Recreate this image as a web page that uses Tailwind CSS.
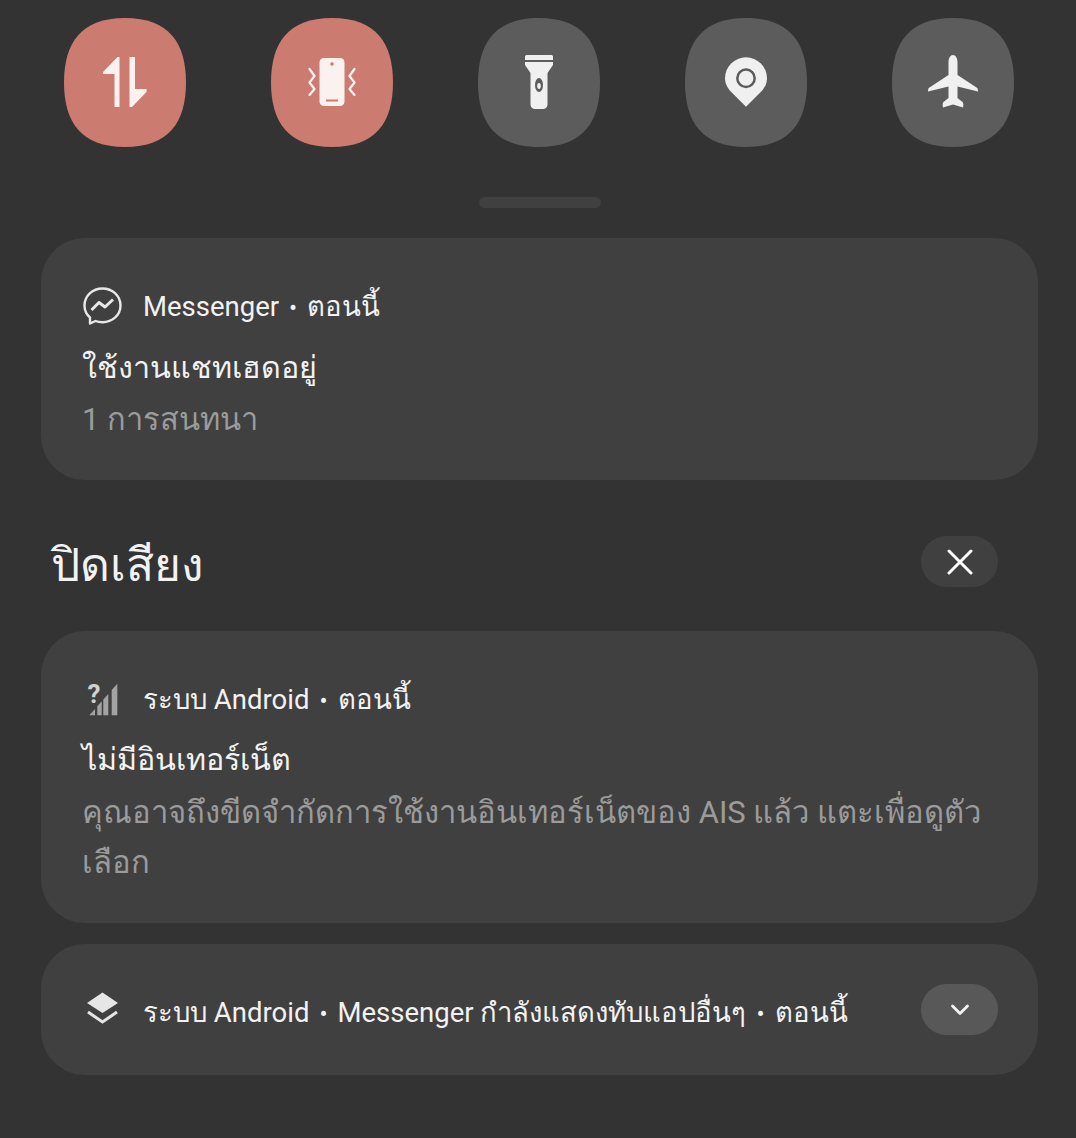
<!DOCTYPE html>
<html lang="th">
<head>
    <meta charset="UTF-8">
    <meta name="viewport" content="width=device-width, initial-scale=1.0">
    <title>Notification shade</title>
    <script src="https://cdn.jsdelivr.net/npm/@tailwindcss/browser@4"></script>
</head>
<body class="bg-[#333333] font-['Roboto','Noto_Sans',sans-serif] text-[#f2f2f2] overflow-hidden">
    <main class="w-[1076px] h-[1138px] pt-[18px]">
        <!-- Quick toggles -->
        <div class="flex gap-[85px] pl-[64px]">
            <svg class="w-[122px] h-[129px]" viewBox="0 0 122 129">
                <path fill="#cb7b70" d="M61 0C105 0 122 25 122 64.500C122 104 105 129 61 129C17 129 0 104 0 64.500C0 25 17 0 61 0Z"/>
                <path fill="#fbf1ef" d="M55.500 39V89H50.500V56H39V54L53.500 39ZM65.500 39H71V71H82.500V74L68 89H65.500Z"/>
            </svg>
            <svg class="w-[122px] h-[129px]" viewBox="0 0 122 129">
                <path fill="#cb7b70" d="M61 0C105 0 122 25 122 64.500C122 104 105 129 61 129C17 129 0 104 0 64.500C0 25 17 0 61 0Z"/>
                <rect x="48.500" y="40" width="25" height="48" rx="4.500" fill="#fbf1ef"/>
                <circle cx="61" cy="46" r="1.800" fill="#cb7b70"/>
                <rect x="55" y="81.500" width="12" height="2" fill="#cb7b70"/>
                <path fill="none" stroke="#fbf1ef" stroke-width="2.200" stroke-linecap="round" stroke-linejoin="round" d="M38.500 51L43.500 58L38.500 64.500L43.500 71L38.500 77M83.500 51L78.500 58L83.500 64.500L78.500 71L83.500 77"/>
            </svg>
            <svg class="w-[122px] h-[129px]" viewBox="0 0 122 129">
                <path fill="#5c5c5c" d="M61 0C105 0 122 25 122 64.500C122 104 105 129 61 129C17 129 0 104 0 64.500C0 25 17 0 61 0Z"/>
                <path fill="#f0f0f0" d="M48.500 37H73.500A1.500 1.500 0 0 1 75 38.500V42H47V38.500A1.500 1.500 0 0 1 48.500 37ZM47 44H75V47L69.500 55V86.500A4.500 4.500 0 0 1 65 91H57A4.500 4.500 0 0 1 52.500 86.500V55L47 47Z"/>
                <ellipse cx="61" cy="67" rx="4" ry="7" fill="#5c5c5c"/>
                <ellipse cx="61" cy="68" rx="1.800" ry="3" fill="#f0f0f0"/>
            </svg>
            <svg class="w-[122px] h-[129px]" viewBox="0 0 122 129">
                <path fill="#5c5c5c" d="M61 0C105 0 122 25 122 64.500C122 104 105 129 61 129C17 129 0 104 0 64.500C0 25 17 0 61 0Z"/>
                <path fill="#f0f0f0" d="M61 39.300A21 21 0 0 1 82 60.300C82 65.800 79.500 69.800 76.500 73.300L61 88.700L45.500 73.300C42.500 69.800 40 65.800 40 60.300A21 21 0 0 1 61 39.300Z"/>
                <circle cx="61" cy="60.300" r="8.700" fill="#f0f0f0" stroke="#5c5c5c" stroke-width="2.500"/>
            </svg>
            <svg class="w-[122px] h-[129px]" viewBox="0 0 122 129">
                <path fill="#5c5c5c" d="M61 0C105 0 122 25 122 64.500C122 104 105 129 61 129C17 129 0 104 0 64.500C0 25 17 0 61 0Z"/>
                <path fill="#f0f0f0" d="M61 37C63.800 37 65.500 40.500 65.500 44V57L84.500 69.500C85.600 70.300 86 71 86 73.500L65.500 68.500V80L70.500 84C71.400 84.800 71.600 86.500 71 89.500L61 86.500L51 89.500C50.400 86.500 50.600 84.800 51.500 84L56.500 80V68.500L36 73.500C36 71 36.400 70.300 37.500 69.500L56.500 57V44C56.500 40.500 58.200 37 61 37Z"/>
            </svg>
        </div>

        <!-- Drag handle -->
        <div class="w-[122px] h-[11px] mt-[50px] ml-[479px] rounded-full bg-[#404040]"></div>

        <section class="mt-[30px] mx-[41px] w-[997px]">
            <!-- Messenger -->
            <div class="h-[242px] rounded-[44px] bg-[#404040] pl-[41px] pt-[46px]">
                <div class="flex items-center h-[44px]">
                    <svg class="w-[40px] h-[40px]" viewBox="0 0 40 40" fill="none">
                        <path stroke="#e8e8e8" stroke-width="2.400" stroke-linejoin="round" d="M20.500 2.500C10.500 2.500 2.500 10 2.500 19.500C2.500 24.500 4.500 28.500 8 31.500V37.500L13.500 35C15.500 35.800 18 36.200 20.500 36.200C30.500 36.200 38.500 29 38.500 19.500C38.500 10 30.500 2.500 20.500 2.500Z"/>
                        <path stroke="#e8e8e8" stroke-width="3" stroke-linejoin="round" d="M9.500 24L17 16.500L23 21L31 13.500"/>
                    </svg>
                    <span class="ml-[21px] mt-[3px] text-[27.500px] leading-[44px]">Messenger<span class="mx-[10px] text-[24px]">•</span>ตอนนี้</span>
                </div>
                <p class="text-[30.500px] leading-[48px] mt-[16px]">ใช้งานแชทเฮดอยู่</p>
                <p class="text-[30.800px] leading-[48px] mt-[4px] text-[#9b9b9b]">1 การสนทนา</p>
            </div>

            <!-- Muted section header -->
            <div class="flex items-start justify-between h-[51px] mt-[56px] pl-[10px] pr-[40px]">
                <h2 class="text-[46px] leading-[52px] mt-[3px]">ปิดเสียง</h2>
                <button class="w-[77px] h-[51px] rounded-full bg-[#404040] flex items-center justify-center">
                    <svg class="w-[26px] h-[26px]" viewBox="0 0 26 26"><path stroke="#ffffff" stroke-width="3" stroke-linecap="round" d="M2 2L24 24M24 2L2 24"/></svg>
                </button>
            </div>

            <!-- No internet -->
            <div class="h-[292px] mt-[44px] rounded-[44px] bg-[#404040] pl-[41px] pt-[47px] pr-[50px]">
                <div class="flex items-center h-[44px]">
                    <svg class="w-[40px] h-[40px] overflow-visible" viewBox="0 0 40 40">
                        <path fill="#a3a3a3" d="M7.300 35.300L13 28.900V35.300ZM15.300 26.300L19.700 21.300V35.300H15.300ZM21.300 19.500L26.300 13.900V35.300H21.300ZM29.700 10L35.300 3.700V35.300H29.700Z"/>
                        <text x="5.500" y="22.500" font-family="Roboto" font-weight="700" font-size="26" fill="#d0d0d0">?</text>
                    </svg>
                    <span class="ml-[21px] text-[27.500px] leading-[44px]">ระบบ Android<span class="mx-[10px] text-[24px]">•</span>ตอนนี้</span>
                </div>
                <p class="text-[30.500px] leading-[48px] mt-[14px]">ไม่มีอินเทอร์เน็ต</p>
                <p class="text-[31px] leading-[50px] mt-[4px] text-[#9b9b9b]">คุณอาจถึงขีดจำกัดการใช้งานอินเทอร์เน็ตของ AIS แล้ว แตะเพื่อดูตัว<br>เลือก</p>
            </div>

            <!-- Collapsed group -->
            <div class="flex items-center h-[131px] mt-[21px] rounded-[44px] bg-[#404040] pl-[41px] pr-[40px]">
                <svg class="w-[40px] h-[40px]" viewBox="0 0 40 40">
                    <path fill="#e6e6e6" d="M20.500 2.500L36 13L20.500 23L5 13Z"/>
                    <path fill="none" stroke="#e6e6e6" stroke-width="3" d="M6 22L20.500 32L35 22"/>
                </svg>
                <span class="ml-[21px] mt-[8px] text-[27.500px] leading-[44px] whitespace-nowrap">ระบบ Android<span class="mx-[10px] text-[24px]">•</span>Messenger กำลังแสดงทับแอปอื่นๆ<span class="mx-[10px] text-[24px]">•</span>ตอนนี้</span>
                <button class="ml-auto w-[77px] h-[51px] rounded-full bg-[#585858] flex items-center justify-center">
                    <svg class="w-[20px] h-[12px]" viewBox="0 0 20 12" fill="none"><path stroke="#f2f2f2" stroke-width="2.800" stroke-linecap="round" stroke-linejoin="round" d="M2.500 2L10 9.500L17.500 2"/></svg>
                </button>
            </div>
        </section>
    </main>
</body>
</html>
